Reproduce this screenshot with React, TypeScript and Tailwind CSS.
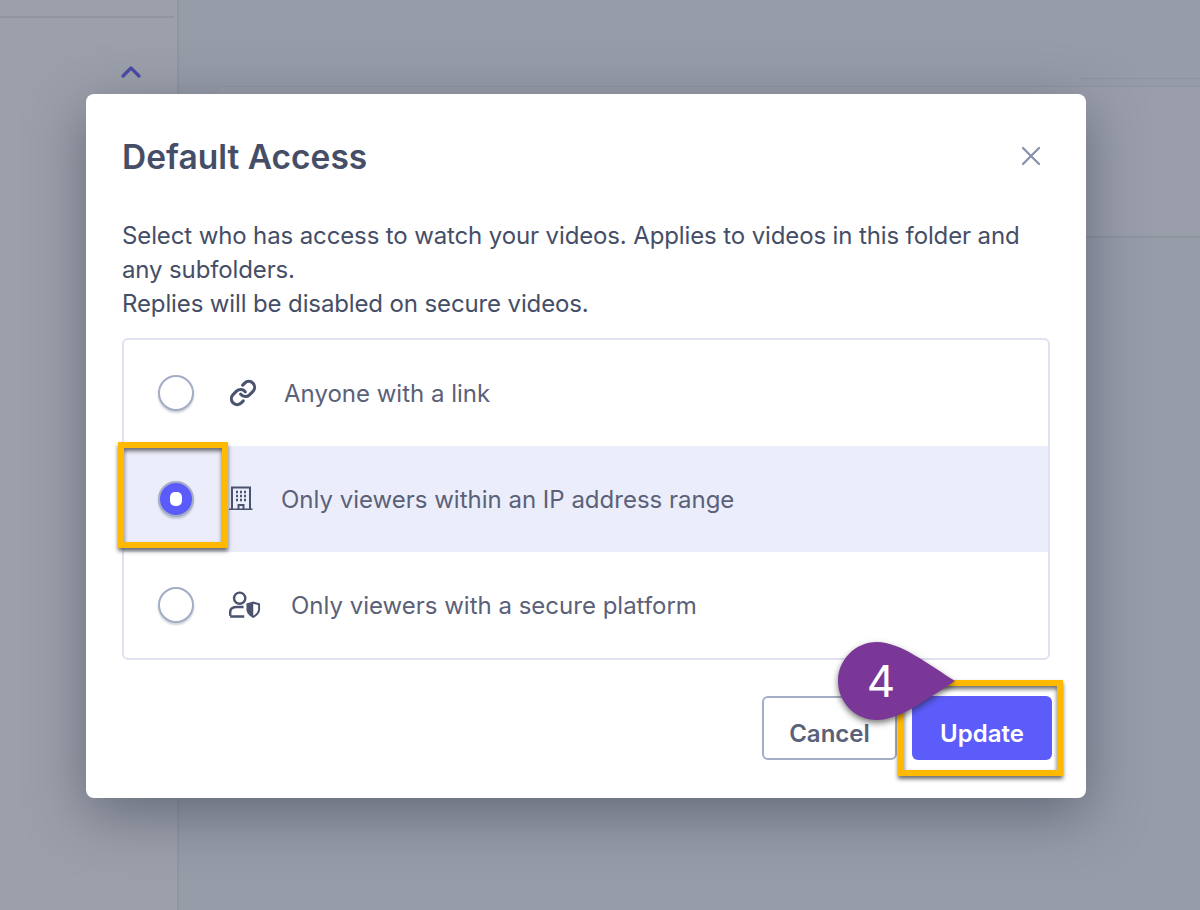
import { ChevronUp, Link, X } from "lucide-react";

const font = { fontFamily: '"Inter", "Liberation Sans", sans-serif' };

function BuildingIcon() {
  return (
    <svg width="24" height="24" viewBox="0 0 24 24" fill="none" stroke="#4a5370" strokeWidth="2" className="-translate-y-px">
      <path d="M0 23.500h23.500M3 23V1.500h18V23M9.500 23v-4h5v4" />
      <path d="M7 6h2M11 6h2M15 6h2M7 10h2M11 10h2M15 10h2M7 14h2M11 14h2M15 14h2" strokeWidth="2.400" />
    </svg>
  );
}

function UserShieldIcon() {
  return (
    <svg width="33" height="28" viewBox="0 0 33 28" fill="none" stroke="#4a5370" strokeWidth="2.500">
      <circle cx="11" cy="7" r="5.800" />
      <path d="M1.200 25v-3.500C1.200 18 4 16 8 16h7M1.200 25.800h14.500" />
      <path d="M18 12.500l7-2 7 2v6c0 4-3.200 7-7 9-3.800-2-7-5-7-9z" fill="#4a5370" stroke="none" />
      <path d="M25 12.700l5 1.400v4.400c0 2.800-2.200 5-5 6.600z" fill="#fff" stroke="none" />
    </svg>
  );
}

function Radio({ checked }: { checked?: boolean }) {
  return (
    <span
      className={
        "flex h-9 w-9 shrink-0 items-center justify-center rounded-full border-2 border-[#a4adc6] shadow-[0_2px_2px_rgba(69,78,102,0.25)] " +
        (checked ? "bg-[#5b5bfb]" : "bg-white")
      }
    >
      {checked && <span className="h-3.5 w-3 rounded-[5px] bg-white" />}
    </span>
  );
}

function Option({
  icon,
  label,
  checked,
  textGap,
}: {
  icon: React.ReactNode;
  label: string;
  checked?: boolean;
  textGap: string;
}) {
  return (
    <div className={"flex h-[106px] items-center pl-[34px]" + (checked ? " bg-[#ebedfb]" : "")}>
      <Radio checked={checked} />
      <span className="ml-[35px] flex w-[32px] shrink-0 items-center">{icon}</span>
      <span className={"pt-[2px] text-[24px] text-[#5a6178] " + textGap}>{label}</span>
    </div>
  );
}

export default function App() {
  return (
    <div className="relative h-[910px] w-[1200px] overflow-hidden bg-[#979ca9]" style={font}>
      {/* Page behind the overlay */}
      <div className="flex h-full">
        <aside className="h-full w-[179px] shrink-0 border-r-2 border-[#90959f] bg-[#9ca0ab]">
          <div className="mr-[3px] mt-[16px] h-[2px] bg-[#90959f]" />
          <div className="mt-[38px] flex justify-end pr-[30px] text-[#4b4aa8]">
            <ChevronUp size={32} strokeWidth={2.4} />
          </div>
        </aside>
        <main className="flex-1 pl-[36px] pt-[78px]">
          <div className="ml-auto h-[8px] w-[120px] border-t border-[#8f949f] bg-[#969ba8]" />
          <div className="h-[152px] rounded-tl-lg border-b-2 border-t border-[#8f949f] bg-[#9a9eaa]" />
        </main>
      </div>

      {/* Modal */}
      <div className="absolute left-[86px] top-[94px] h-[704px] w-[1000px] rounded-lg bg-white px-[36px] shadow-[0_16px_56px_rgba(50,56,74,0.5)]">
        <div className="flex h-[124px] items-center justify-between">
          <h2 className="pt-[2px] text-[33.500px] font-semibold text-[#454e66]">Default Access</h2>
          <X size={32} strokeWidth={1.7} className="mr-[3px] text-[#8891ad]" />
        </div>
        <p className="h-[120px] pt-[1px] text-[24px] leading-[34px] tracking-[-0.125px] text-[#454e66]">
          Select who has access to watch your videos. Applies to videos in this folder and
          <br />
          any subfolders.
          <br />
          Replies will be disabled on secure videos.
        </p>
        <div className="overflow-hidden rounded-md border-2 border-[#dfe3f0]">
          <Option icon={<Link size={28} strokeWidth={2.700} className="text-[#4a5370]" />} label="Anyone with a link" textGap="ml-[23px]" />
          <Option icon={<BuildingIcon />} label="Only viewers within an IP address range" checked textGap="ml-[20px]" />
          <Option icon={<UserShieldIcon />} label="Only viewers with a secure platform" textGap="ml-[30px]" />
        </div>
        <div className="mt-[36px] flex justify-end gap-[15px]">
          <button className="h-16 w-[135px] rounded-md border-2 border-[#a4adc6] bg-white pt-[11px] text-[24px] font-semibold text-[#5a6178]">Cancel</button>
          <button className="mr-[-2px] h-16 w-[140px] rounded-md bg-[#5c5cfb] pt-[12px] text-[24px] font-semibold text-white">Update</button>
        </div>
      </div>

      {/* Tutorial highlights */}
      <div className="absolute left-[118px] top-[442px] h-[106px] w-[110px] border-[6px] border-[#ffb900] shadow-[0_3px_4px_rgba(30,30,30,0.65),inset_0_3px_4px_rgba(30,30,30,0.65)]" />
      <div className="absolute left-[898px] top-[680px] h-[96px] w-[165px] border-[6px] border-[#ffb900] shadow-[0_3px_4px_rgba(30,30,30,0.65),inset_0_3px_4px_rgba(30,30,30,0.65)]" />
      <div className="absolute left-[838px] top-[642px] h-[78px] w-[118px]">
        <svg width="118" height="78" viewBox="0 0 118 78" className="absolute inset-0 overflow-visible drop-shadow-[0_3px_3px_rgba(30,30,30,0.6)]">
          <path d="M39 0C62 0 90 22 117 39C90 56 62 78 39 78C17 78 0 60 0 39C0 18 17 0 39 0Z" fill="#7a3797" />
        </svg>
        <span className="absolute left-0 top-0 flex h-[78px] w-[86px] items-center justify-center text-[44px] text-white">
          4
        </span>
      </div>
    </div>
  );
}
